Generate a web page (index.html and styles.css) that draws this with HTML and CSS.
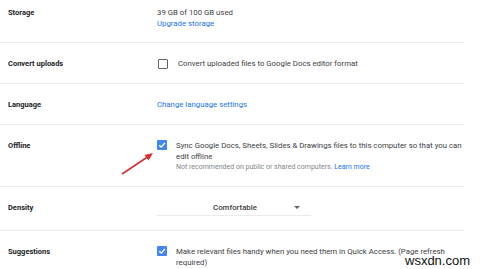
FILE: index.html
```html
<!DOCTYPE html>
<html lang="en">
<head>
  <meta charset="UTF-8" />
  <meta name="viewport" content="width=device-width, initial-scale=1.0" />
  <title>Settings</title>
  <link rel="stylesheet" href="styles.css">
</head>
<body>
  <div class="settings">
    <div class="row first">
      <div class="label">Storage</div>
      <div class="value">
        <div>39 GB of 100 GB used</div>
        <a class="link">Upgrade storage</a>
      </div>
    </div>

    <div class="row">
      <div class="label">Convert uploads</div>
      <div class="value check-line">
        <span class="box"></span>
        <div>Convert uploaded files to Google Docs editor format</div>
      </div>
    </div>

    <div class="row">
      <div class="label">Language</div>
      <div class="value"><a class="link">Change language settings</a></div>
    </div>

    <div class="row">
      <div class="label">Offline</div>
      <div class="value check-line">
        <span class="box checked">
          <svg viewBox="0 0 10 10" width="10" height="10"><path d="M2.2 5.2 L4.2 7.1 L7.9 3" fill="none" stroke="#fff" stroke-width="1.4"/></svg>
        </span>
        <div class="text">
          <div>Sync Google Docs, Sheets, Slides &amp; Drawings files to this computer so that you can edit offline</div>
          <div class="hint">Not recommended on public or shared computers. <a class="link">Learn more</a></div>
        </div>
      </div>
      <svg class="arrow" width="40" height="26" viewBox="0 0 40 26">
        <path d="M2 24 L29 6" stroke="#d32f2f" stroke-width="1.6" fill="none"/>
        <path d="M33 3 L24.5 5 L28.5 10.5 Z" fill="#d32f2f"/>
      </svg>
    </div>

    <div class="row">
      <div class="label">Density</div>
      <div class="value">
        <div class="select">
          <span class="choice">Comfortable</span>
          <span class="caret"></span>
        </div>
      </div>
    </div>

    <div class="row last">
      <div class="label">Suggestions</div>
      <div class="value check-line">
        <span class="box checked">
          <svg viewBox="0 0 10 10" width="10" height="10"><path d="M2.2 5.2 L4.2 7.1 L7.9 3" fill="none" stroke="#fff" stroke-width="1.4"/></svg>
        </span>
        <div class="text narrow">Make relevant files handy when you need them in Quick Access. (Page refresh required)</div>
      </div>
    </div>
  </div>

  <div class="watermark">wsxdn.com</div>
</body>
</html>
```

FILE: styles.css
```css
body {
  margin: 0;
  background-color: #fff;
  font-family: Roboto, 'Liberation Sans', sans-serif;
  font-size: 7.8px;
  color: #3c4043;
  overflow: hidden;
}
.settings {
  width: 456px;
  padding-left: 8px;
}
.row {
  position: relative;
  display: flex;
  padding: 15px 0 14px 8px;
  margin-left: -8px;
  line-height: 11px;
  border-bottom: 1px solid #e8eaed;
}
.row.first {
  padding-top: 7px;
  padding-bottom: 13px;
}
.row.last {
  border-bottom: none;
}
.label {
  width: 149px;
  flex: none;
  font-size: 7.5px;
  font-weight: 700;
  color: #202124;
}
.value {
  flex: 1;
}
.link {
  color: #1a73e8;
  cursor: pointer;
}
.check-line {
  display: flex;
  align-items: flex-start;
}
.text {
  margin-right: -8px;
}
.text.narrow {
  margin-right: 0;
}
.box {
  flex: none;
  width: 8px;
  height: 8px;
  margin: 1px 10px 0 1px;
  border: 1px solid #5f6368;
  border-radius: 1px;
}
.box.checked {
  width: 10px;
  height: 10px;
  margin: 0 9px 0 0;
  border: none;
  background-color: #4285f4;
}
.box svg {
  display: block;
}
.hint {
  font-size: 7px;
  line-height: 10px;
  color: #80868b;
}
.arrow {
  position: absolute;
  left: 120px;
  top: 25px;
}
.select {
  position: relative;
  width: 153px;
  padding: 0 0 2px 1px;
  text-align: center;
  border-bottom: 1px solid #e8eaed;
  font-weight: 500;
  color: #3c4043;
}
.choice {
  margin-left: 1px;
}
.caret {
  position: absolute;
  right: 11px;
  top: 4px;
  width: 0;
  height: 0;
  border-left: 3px solid transparent;
  border-right: 3px solid transparent;
  border-top: 3px solid #5f6368;
}
.watermark {
  position: absolute;
  left: 405px;
  top: 254px;
  font-family: 'Liberation Sans', sans-serif;
  font-size: 13px;
  line-height: 13px;
  color: #111;
}
```
